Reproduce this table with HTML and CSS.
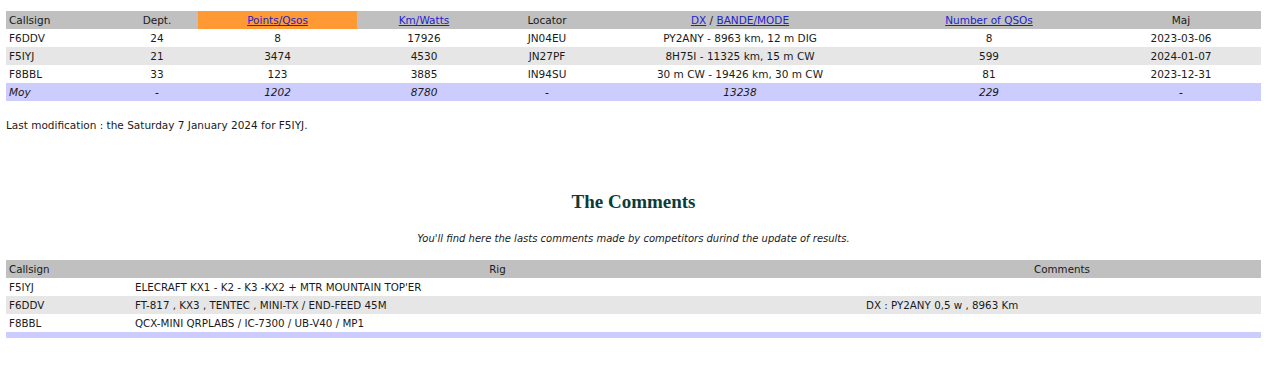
FILE: index.html
```html
<!DOCTYPE html>
<html>
<head>
<meta charset="utf-8">
<link rel="stylesheet" href="styles.css">
</head>
<body>
<table class="grid results">
  <colgroup>
    <col class="c1"><col class="c2"><col class="c3"><col class="c4"><col class="c5"><col class="c6"><col class="c7"><col class="c8">
  </colgroup>
  <thead>
    <tr class="head">
      <th class="left">Callsign</th>
      <th>Dept.</th>
      <th class="sorted"><a href="#">Points/Qsos</a></th>
      <th><a href="#">Km/Watts</a></th>
      <th>Locator</th>
      <th><a href="#">DX</a> / <a href="#">BANDE/MODE</a></th>
      <th><a href="#">Number of QSOs</a></th>
      <th>Maj</th>
    </tr>
  </thead>
  <tbody>
    <tr><td class="left">F6DDV</td><td>24</td><td>8</td><td>17926</td><td>JN04EU</td><td>PY2ANY - 8963 km, 12 m DIG</td><td>8</td><td>2023-03-06</td></tr>
    <tr class="alt"><td class="left">F5IYJ</td><td>21</td><td>3474</td><td>4530</td><td>JN27PF</td><td>8H75I - 11325 km, 15 m CW</td><td>599</td><td>2024-01-07</td></tr>
    <tr><td class="left">F8BBL</td><td>33</td><td>123</td><td>3885</td><td>IN94SU</td><td>30 m CW - 19426 km, 30 m CW</td><td>81</td><td>2023-12-31</td></tr>
    <tr class="avg"><td class="left">Moy</td><td>-</td><td>1202</td><td>8780</td><td>-</td><td>13238</td><td>229</td><td>-</td></tr>
  </tbody>
</table>

<p class="modif">Last modification : the Saturday 7 January 2024 for F5IYJ.</p>

<h2 class="title">The Comments</h2>
<p class="intro">You'll find here the lasts comments made by competitors durind the update of results.</p>

<table class="grid comments">
  <colgroup>
    <col class="k1"><col class="k2"><col class="k3">
  </colgroup>
  <thead>
    <tr class="head"><th class="left">Callsign</th><th>Rig</th><th>Comments</th></tr>
  </thead>
  <tbody>
    <tr><td class="left">F5IYJ</td><td class="left">ELECRAFT KX1 - K2 - K3 -KX2 + MTR MOUNTAIN TOP'ER</td><td class="left"></td></tr>
    <tr class="alt"><td class="left">F6DDV</td><td class="left">FT-817 , KX3 , TENTEC , MINI-TX / END-FEED 45M</td><td class="left">DX : PY2ANY 0,5 w , 8963 Km</td></tr>
    <tr><td class="left">F8BBL</td><td class="left">QCX-MINI QRPLABS / IC-7300 / UB-V40 / MP1</td><td class="left"></td></tr>
    <tr class="avg foot"><td></td><td></td><td></td></tr>
  </tbody>
</table>
</body>
</html>
```
FILE: styles.css
```css
html, body {
  margin: 0;
  padding: 0;
  background: #ffffff;
}
body {
  padding: 11px 17px 0 6px;
  font-family: "DejaVu Sans", Verdana, sans-serif;
  font-size: 10.5px;
  color: #1a1a1a;
}
.grid {
  border-collapse: collapse;
  table-layout: fixed;
  width: 1255px;
}
.grid th, .grid td {
  height: 18px;
  padding: 0 3px;
  text-align: center;
  font-weight: normal;
  white-space: nowrap;
  overflow: hidden;
  line-height: 18px;
}
.grid .left { text-align: left; }
.head { background: #c0c0c0; }
.alt { background: #e6e6e6; }
.avg { background: #ccccff; font-style: italic; }
.sorted { background: #ff9933; }
.grid a { color: #2222cc; text-decoration: underline; }

.c1 { width: 110px; }
.c2 { width: 82px; }
.c3 { width: 159px; }
.c4 { width: 134px; }
.c5 { width: 112px; }
.c6 { width: 274px; }
.c7 { width: 224px; }
.c8 { width: 160px; }

.modif {
  margin: 18px 0 0 0;
  line-height: 12px;
}
.title {
  margin: 60px 0 0 0;
  text-align: center;
  font-family: "Liberation Serif", "Times New Roman", serif;
  font-size: 19px;
  font-weight: bold;
  color: #0d3b3b;
  line-height: 22px;
}
.intro {
  margin: 20px 0 0 0;
  text-align: center;
  font-style: italic;
  font-size: 10px;
  line-height: 12px;
}
.comments { margin-top: 15px; font-size: 10.3px; }
.k1 { width: 126px; }
.k2 { width: 731px; }
.k3 { width: 398px; }
.comments .foot td { height: 6px; line-height: 6px; }
```
